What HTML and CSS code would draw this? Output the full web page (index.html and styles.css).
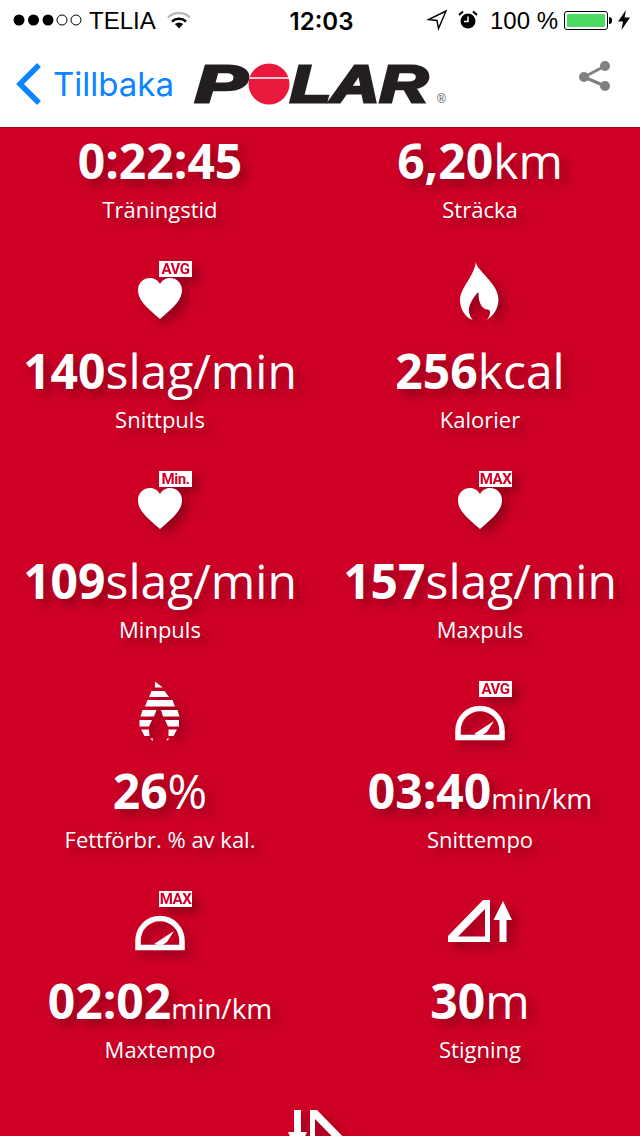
FILE: index.html

```html
<!DOCTYPE html>
<html>
<head>
	<meta charset="utf-8" />
	<title>Polar</title>
	<link rel="stylesheet" href="styles.css">
</head>
<body>
	<div class="status">
		<div class="status-left">
			<svg class="signal" width="70" height="14" viewBox="0 0 70 14">
				<circle cx="6" cy="7" r="5.5" fill="#000"/>
				<circle cx="20.5" cy="7" r="5.5" fill="#000"/>
				<circle cx="35" cy="7" r="5.5" fill="#000"/>
				<circle cx="49" cy="7" r="5" fill="none" stroke="#000"/>
				<circle cx="63" cy="7" r="5" fill="none" stroke="#000"/>
			</svg>
			<span class="carrier">TELIA</span>
			<svg class="wifi" width="24" height="18" viewBox="0 0 24 18">
				<path d="M1 6.5C7 .5 17 .5 23 6.5" fill="none" stroke="#bbb" stroke-width="2.4"/>
				<path d="M5 10.5C9 6.8 15 6.8 19 10.5" fill="none" stroke="#000" stroke-width="2.4"/>
				<path d="M7.8 13C10.5 11 13.5 11 16.2 13L12 17.5Z" fill="#000"/>
			</svg>
		</div>
		<div class="clock">12:03</div>
		<div class="status-right">
			<svg width="20" height="20" viewBox="0 0 20 20">
				<path d="M19 1L1.5 9.5 10 10.5 11.5 18.5Z" fill="none" stroke="#000" stroke-width="1.4"/>
			</svg>
			<svg class="alarm" width="20" height="20" viewBox="0 0 20 20">
				<circle cx="10" cy="11" r="7.5" fill="#000"/>
				<path d="M10 6.5V11.5H6" fill="none" stroke="#fff" stroke-width="1.5"/>
				<path d="M1 5L5 1.5M19 5L15 1.5" stroke="#000" stroke-width="2"/>
			</svg>
			<span class="battery-text">100 %</span>
			<div class="battery"><div class="battery-fill"></div></div>
			<svg class="bolt" width="12" height="20" viewBox="0 0 12 20">
				<path d="M8 0L0 11.5H5L3.5 20 12 7.5H6.5Z" fill="#000"/>
			</svg>
		</div>
	</div>

	<div class="nav">
		<svg class="back-arrow" width="27" height="44" viewBox="0 0 27 44">
			<path d="M24 3L5 22 24 41" fill="none" stroke="#0a84ff" stroke-width="5.5"/>
		</svg>
		<span class="back-text">Tillbaka</span>
		<div class="logo">
			<span class="logo-p">P</span>
			<svg class="logo-o" width="42" height="42" viewBox="0 0 42 42">
				<circle cx="21" cy="21" r="20.5" fill="#e8193c"/>
				<path d="M0 15H42" stroke="#fff" stroke-width="1.5"/>
			</svg>
			<span class="logo-lar">LAR</span>
			<span class="logo-reg">®</span>
		</div>
		<svg class="share" width="34" height="36" viewBox="0 0 34 36">
			<path d="M27 6L6 17 27 26" fill="none" stroke="#808080" stroke-width="3"/>
			<circle cx="27" cy="6" r="5" fill="#808080"/>
			<circle cx="6" cy="17" r="5" fill="#808080"/>
			<circle cx="27" cy="26" r="5" fill="#808080"/>
		</svg>
	</div>

	<div class="stats">
		<div class="stat stat-first">
			<div class="value"><b>0:22:45</b></div>
			<div class="label">Träningstid</div>
		</div>
		<div class="stat stat-first">
			<div class="value"><b>6,20</b>km</div>
			<div class="label">Sträcka</div>
		</div>

		<div class="stat">
			<div class="icon">
				<svg width="60" height="60" viewBox="0 0 60 60"><path class="white" d="M30 58C16 46 8 39 8 29 8 21.5 14 17 20 17 24.5 17 28 19.5 30 23 32 19.5 35.5 17 40 17 46 17 52 21.5 52 29 52 39 44 46 30 58Z"/></svg>
				<span class="badge">AVG</span>
			</div>
			<div class="value"><b>140</b>slag/min</div>
			<div class="label">Snittpuls</div>
		</div>
		<div class="stat">
			<div class="icon">
				<svg width="60" height="60" viewBox="0 0 60 60"><path class="white" d="M25.7 1C27 10 48 22 48.5 38 48.5 48 43 55 36.7 59 41 54 41 49 38 48.5 34 49 28 44 28.5 31 23 36 18 45 19 51 19.5 54 21 57 22.7 59 15 56 10 48 10 39 10 27 25 14 25.7 1Z"/></svg>
			</div>
			<div class="value"><b>256</b>kcal</div>
			<div class="label">Kalorier</div>
		</div>

		<div class="stat">
			<div class="icon">
				<svg width="60" height="60" viewBox="0 0 60 60"><path class="white" d="M30 58C16 46 8 39 8 29 8 21.5 14 17 20 17 24.5 17 28 19.5 30 23 32 19.5 35.5 17 40 17 46 17 52 21.5 52 29 52 39 44 46 30 58Z"/></svg>
				<span class="badge">Min.</span>
			</div>
			<div class="value"><b>109</b>slag/min</div>
			<div class="label">Minpuls</div>
		</div>
		<div class="stat">
			<div class="icon">
				<svg width="60" height="60" viewBox="0 0 60 60"><path class="white" d="M30 58C16 46 8 39 8 29 8 21.5 14 17 20 17 24.5 17 28 19.5 30 23 32 19.5 35.5 17 40 17 46 17 52 21.5 52 29 52 39 44 46 30 58Z"/></svg>
				<span class="badge">MAX</span>
			</div>
			<div class="value"><b>157</b>slag/min</div>
			<div class="label">Maxpuls</div>
		</div>

		<div class="stat">
			<div class="icon">
				<!-- striped drop, each band is cut around the flame in the middle -->
				<svg width="60" height="60" viewBox="0 0 60 60">
					<path class="white" d="M25 0.5L32.7 6.5H25Z"/>
					<path class="white" d="M21.5 10H34.500L39 16H19Z"/>
					<path class="white" d="M17.5 19H42.5L45 25.5H15Z"/>
					<path class="white" d="M12.5 29H26.5L24 35.5H10.5ZM31 29H47.5L49.5 35.5H33Z"/>
					<path class="white" d="M9.5 39H22L19 45.5H9.5ZM35 39H49V45.5H38Z"/>
					<path class="white" d="M11 48.5H19L19.5 55H14.5ZM38.5 48.5H47L43.5 55H38.5Z"/>
					<path class="white" d="M20 57.5L22.7 60 23 57.5ZM37 57.5L36.5 60 39.5 57.5Z"/>
				</svg>
			</div>
			<div class="value"><b>26</b>%</div>
			<div class="label">Fettförbr. % av kal.</div>
		</div>
		<div class="stat">
			<div class="icon">
				<svg width="60" height="60" viewBox="0 0 60 60">
					<path d="M8 56.5V50C8 37 18 27.5 30 27.5 42 27.5 52 37 52 50V56.5H8Z" fill="none" stroke="#fff" stroke-width="5.5"/>
					<path class="white" d="M24 53L44 40 37 51 31 55Z"/>
				</svg>
				<span class="badge">AVG</span>
			</div>
			<div class="value"><b>03:40</b><small>min/km</small></div>
			<div class="label">Snittempo</div>
		</div>

		<div class="stat">
			<div class="icon">
				<svg width="60" height="60" viewBox="0 0 60 60">
					<path d="M8 56.5V50C8 37 18 27.5 30 27.5 42 27.5 52 37 52 50V56.5H8Z" fill="none" stroke="#fff" stroke-width="5.5"/>
					<path class="white" d="M24 53L44 40 37 51 31 55Z"/>
				</svg>
				<span class="badge">MAX</span>
			</div>
			<div class="value"><b>02:02</b><small>min/km</small></div>
			<div class="label">Maxtempo</div>
		</div>
		<div class="stat">
			<div class="icon">
				<svg width="60" height="60" viewBox="0 0 60 60">
					<path class="white" fill-rule="evenodd" d="M33 9H40V51H-2V45ZM8 45.5H35V18Z"/>
					<path class="white" d="M53 10L62 29H56.5V51H49.5V29H43.5Z"/>
				</svg>
			</div>
			<div class="value"><b>30</b>m</div>
			<div class="label">Stigning</div>
		</div>

		<div class="stat stat-wide">
			<div class="icon">
				<svg width="60" height="60" viewBox="0 0 60 60">
					<path class="white" fill-rule="evenodd" d="M20 9H27L62 45V51H20ZM25 18V45.5H52Z"/>
					<path class="white" d="M7.5 52L-2 31H4V9H11V31H17Z"/>
				</svg>
			</div>
		</div>
	</div>
</body>
</html>
```

FILE: styles.css

```css
* {
  box-sizing: border-box;
}

html, body {
  margin: 0;
  height: 1136px;
  overflow: hidden;
  background: #ce0026;
}

body {
  font-family: "Open Sans", sans-serif;
}

svg {
  display: block;
  overflow: visible;
}

/* status bar */
.status {
  display: flex;
  align-items: center;
  height: 40px;
  padding: 0 10px 0 13px;
  background: #fff;
  font-family: "Liberation Sans", sans-serif;
  font-size: 24px;
  color: #000;
}

.status-left, .status-right {
  flex: 1;
  display: flex;
  align-items: center;
}

.status-right {
  justify-content: flex-end;
}

.carrier, .battery-text, .clock {
  padding-top: 2px;
}

.carrier {
  margin-left: 6px;
}

.wifi {
  margin-left: 11px;
}

.clock {
  font-family: "Inter", sans-serif;
  font-weight: 600;
  font-size: 24px;
}

.alarm {
  margin-left: 11px;
}

.battery-text {
  margin-left: 12px;
}

.battery {
  position: relative;
  width: 44px;
  height: 19px;
  margin-left: 6px;
  padding: 2px;
  border: 1px solid #000;
  border-radius: 3px;
}

.battery::after {
  content: "";
  position: absolute;
  right: -5px;
  top: 5px;
  width: 3px;
  height: 7px;
  background: #000;
  border-radius: 0 3px 3px 0;
}

.battery-fill {
  height: 100%;
  background: #4cd964;
  border-radius: 1px;
}

.bolt {
  margin-left: 10px;
}

/* navigation */
.nav {
  display: flex;
  align-items: center;
  height: 88px;
  padding: 0 28px 0 15px;
  background: #fff;
  border-bottom: 1px solid #a3001e;
}

.back-text {
  margin-left: 11px;
  font-family: "Inter", sans-serif;
  font-size: 33px;
  color: #0a84ff;
}

.logo {
  display: flex;
  align-items: center;
  height: 44px;
  margin-left: 21px;
  color: #231f20;
  font-family: "Liberation Sans", sans-serif;
  font-weight: 700;
  font-style: italic;
  font-size: 52px;
  line-height: 44px;
  -webkit-text-stroke: 3px #231f20;
}

.logo-p {
  display: inline-block;
  width: 53px;
  transform: scaleX(1.5);
  transform-origin: left center;
}

.logo-o {
  flex: none;
}

.logo-lar {
  display: inline-block;
  width: 147px;
  transform: scaleX(1.29);
  transform-origin: left center;
  white-space: nowrap;
}

.logo-reg {
  font-size: 12px;
  font-style: normal;
  font-weight: 400;
  color: #555;
  align-self: flex-end;
  -webkit-text-stroke: 0;
  line-height: 14px;
}

.share {
  margin-left: auto;
  margin-top: -12px;
}

/* stats grid */
.stats {
  display: grid;
  grid-template-columns: 320px 320px;
}

.stat {
  height: 210px;
  padding-top: 12px;
  display: flex;
  flex-direction: column;
  align-items: center;
  color: #fff;
  text-shadow: 6px 6px 10px rgba(0, 0, 0, .3);
}

.stat-first {
  height: 121px;
  padding-top: 1px;
}

.stat-wide {
  grid-column: 1 / span 2;
}

.icon {
  position: relative;
  width: 60px;
  height: 60px;
  margin-bottom: 18px;
  filter: drop-shadow(6px 6px 5px rgba(0, 0, 0, .28));
}

.white {
  fill: #fff;
}

.badge {
  position: absolute;
  right: -2px;
  top: 0;
  width: 33px;
  height: 16px;
  background: #fff;
  color: #ce0026;
  font-family: "Roboto", sans-serif;
  font-weight: 700;
  font-size: 15px;
  line-height: 16px;
  letter-spacing: -.5px;
  text-align: center;
  text-shadow: none;
}

.value {
  height: 64px;
  font-size: 48px;
  line-height: 64px;
  white-space: nowrap;
}

.value b {
  font-weight: 700;
}

.value small {
  font-size: 28px;
}

.label {
  font-size: 22px;
  line-height: 32px;
}
```
